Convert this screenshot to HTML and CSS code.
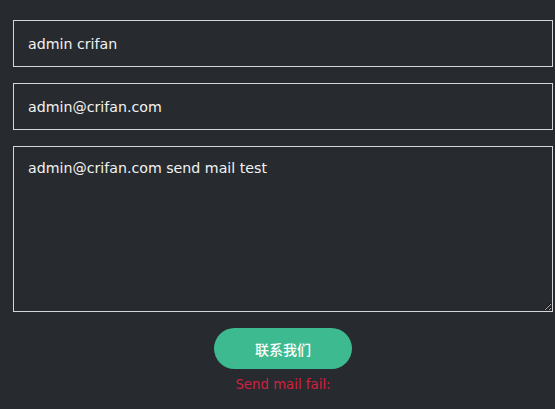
FILE: index.html
```html
<!DOCTYPE html>
<html lang="en">
<head>
  <meta charset="UTF-8" />
  <meta name="viewport" content="width=device-width, initial-scale=1.0"/>
  <title>Contact</title>
  <link rel="stylesheet" href="styles.css">
</head>
<body>
  <!-- Contact Form -->
  <form class="contact-form">
    <div class="form-group">
      <input type="text" name="name" value="admin crifan">
    </div>
    <div class="form-group">
      <input type="email" name="email" value="admin@crifan.com">
    </div>
    <div class="form-group">
      <textarea name="message">admin@crifan.com send mail test</textarea>
    </div>
    <div class="button-group">
      <button type="button">联系我们</button>
    </div>
    <div class="status-message">Send mail fail:</div>
  </form>
</body>
</html>
```

FILE: styles.css
```css
body {
  margin: 0;
  padding: 0;
  background-color: #272b2f;
  font-family: "DejaVu Sans", "Noto Sans CJK SC", sans-serif;
}
.contact-form {
  margin: 0 2px 0 13px;
  padding-top: 20px;
}
.form-group {
  margin-bottom: 16px;
}
.form-group input,
.form-group textarea {
  display: block;
  box-sizing: border-box;
  width: 100%;
  margin: 0;
  padding: 13px 14px;
  background-color: #272b2f;
  color: #f2f2f2;
  border: 1px solid #d6d6d6;
  border-radius: 0;
  font-family: inherit;
  font-size: 14.2px;
  outline: none;
}
.form-group input {
  height: 47px;
}
.form-group textarea {
  height: 166px;
  padding-top: 13px;
  resize: vertical;
}
.button-group {
  display: flex;
  justify-content: center;
}
.button-group button {
  width: 138px;
  height: 41px;
  border: none;
  border-radius: 21px;
  background-color: #3dba8f;
  color: #fff;
  font-family: "Noto Sans CJK SC", sans-serif;
  font-size: 14px;
  font-weight: 500;
  cursor: pointer;
}
.status-message {
  margin-top: 8px;
  text-align: center;
  color: #d0213f;
  font-size: 13.3px;
}
```
